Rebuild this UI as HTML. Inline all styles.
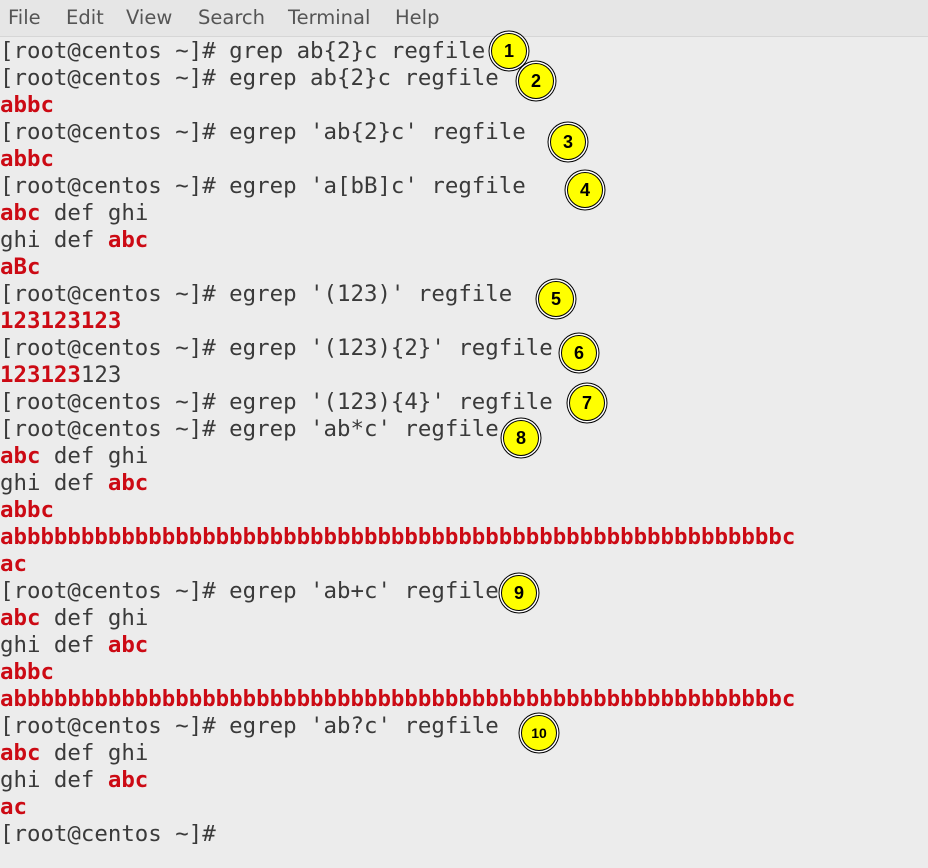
<!DOCTYPE html>
<html><head><style>
body{margin:0;width:928px;height:868px;background:#ececec;overflow:hidden;position:relative;font-family:"DejaVu Sans Mono","Liberation Mono",monospace;}
.menu{position:absolute;left:0;top:0;width:928px;height:36px;background:#e6e6e6;border-bottom:1px solid #d6d6d6;font-family:"DejaVu Sans","Liberation Sans",sans-serif;font-size:19.5px;color:#555;}
.menu span{position:absolute;top:6px;}
.term{position:absolute;left:0;top:38px;font-size:22.4px;line-height:27px;color:#3a3a3a;white-space:pre;}
.r{color:#cc0a14;font-weight:bold;}
.c{position:absolute;width:34px;height:34px;border-radius:50%;background:#ffff00;border:1px solid #000;box-shadow:0 0 0 1.5px #fff,0 0 0 2.5px #000;font-family:"Liberation Sans",sans-serif;font-weight:bold;font-size:18px;color:#000;text-align:center;line-height:34px;}
</style></head><body>
<div class="menu"><span style="left:8px">File</span><span style="left:66px">Edit</span><span style="left:126px">View</span><span style="left:198px">Search</span><span style="left:288px">Terminal</span><span style="left:395px">Help</span></div>
<div class="term">[root@centos ~]# grep ab{2}c regfile
[root@centos ~]# egrep ab{2}c regfile
<span class="r">abbc</span>
[root@centos ~]# egrep 'ab{2}c' regfile
<span class="r">abbc</span>
[root@centos ~]# egrep 'a[bB]c' regfile
<span class="r">abc</span> def ghi
ghi def <span class="r">abc</span>
<span class="r">aBc</span>
[root@centos ~]# egrep '(123)' regfile
<span class="r">123123123</span>
[root@centos ~]# egrep '(123){2}' regfile
<span class="r">123123</span>123
[root@centos ~]# egrep '(123){4}' regfile
[root@centos ~]# egrep 'ab*c' regfile
<span class="r">abc</span> def ghi
ghi def <span class="r">abc</span>
<span class="r">abbc</span>
<span class="r">abbbbbbbbbbbbbbbbbbbbbbbbbbbbbbbbbbbbbbbbbbbbbbbbbbbbbbbbbc</span>
<span class="r">ac</span>
[root@centos ~]# egrep 'ab+c' regfile
<span class="r">abc</span> def ghi
ghi def <span class="r">abc</span>
<span class="r">abbc</span>
<span class="r">abbbbbbbbbbbbbbbbbbbbbbbbbbbbbbbbbbbbbbbbbbbbbbbbbbbbbbbbbc</span>
[root@centos ~]# egrep 'ab?c' regfile
<span class="r">abc</span> def ghi
ghi def <span class="r">abc</span>
<span class="r">ac</span>
[root@centos ~]#</div>
<div class="c" style="left:491px;top:33px">1</div>
<div class="c" style="left:518px;top:63px">2</div>
<div class="c" style="left:550px;top:124px">3</div>
<div class="c" style="left:567px;top:172px">4</div>
<div class="c" style="left:538px;top:281px">5</div>
<div class="c" style="left:561px;top:335px">6</div>
<div class="c" style="left:569px;top:385px">7</div>
<div class="c" style="left:503px;top:420px">8</div>
<div class="c" style="left:501px;top:575px">9</div>
<div class="c" style="left:521px;top:715px;font-size:14px">10</div>
</body></html>
